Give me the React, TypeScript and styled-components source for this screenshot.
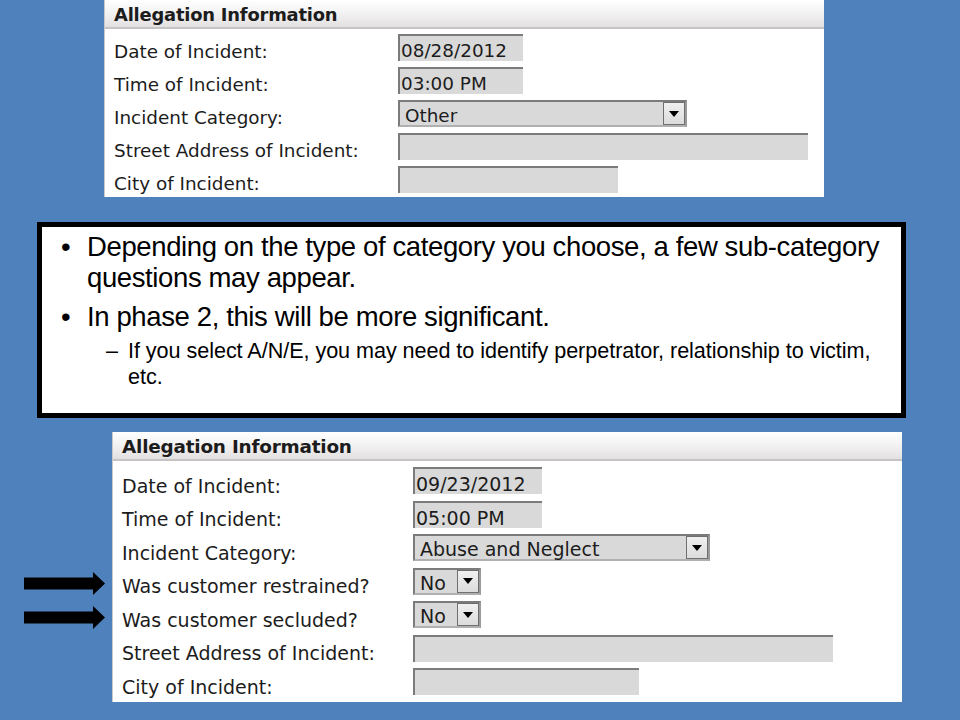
import React from 'react';
import styled, { createGlobalStyle } from 'styled-components';

const GlobalStyle = createGlobalStyle`
    html, body {
        margin: 0;
        padding: 0;
        background: #4f81bd;
    }
`;

interface IField {
    label: string
    value?: string
    kind: 'text' | 'select'
    width: number
    marked?: boolean
}

interface IPanelProps {
    fields: IField[]
    big?: boolean
}

const topFields: IField[] = [
    { label: 'Date of Incident:', value: '08/28/2012', kind: 'text', width: 125 },
    { label: 'Time of Incident:', value: '03:00 PM', kind: 'text', width: 125 },
    { label: 'Incident Category:', value: 'Other', kind: 'select', width: 289 },
    { label: 'Street Address of Incident:', kind: 'text', width: 410 },
    { label: 'City of Incident:', kind: 'text', width: 220 },
];

const bottomFields: IField[] = [
    { label: 'Date of Incident:', value: '09/23/2012', kind: 'text', width: 129 },
    { label: 'Time of Incident:', value: '05:00 PM', kind: 'text', width: 129 },
    { label: 'Incident Category:', value: 'Abuse and Neglect', kind: 'select', width: 297 },
    { label: 'Was customer restrained?', value: 'No', kind: 'select', width: 68, marked: true },
    { label: 'Was customer secluded?', value: 'No', kind: 'select', width: 68, marked: true },
    { label: 'Street Address of Incident:', kind: 'text', width: 420 },
    { label: 'City of Incident:', kind: 'text', width: 226 },
];

const Arrow = (): JSX.Element => (
    <SArrow width="81" height="23" viewBox="0 0 81 23">
        <polygon points="0,5.5 69,5.5 69,0 81,11.5 69,23 69,17.5 0,17.5" fill="#000" />
    </SArrow>
);

const FormPanel = ({ fields, big }: IPanelProps): JSX.Element => {
    return (
        <SPanel>
            <SHeader big={big}>Allegation Information</SHeader>
            <SRows big={big}>
                {fields.map((f) => (
                    <SRow key={f.label} big={big}>
                        {f.marked && <Arrow />}
                        <SLabel big={big}>{f.label}</SLabel>
                        {f.kind === 'text' ? (
                            <SInput style={{ width: f.width }}>{f.value}</SInput>
                        ) : (
                            <SSelect style={{ width: f.width }}>
                                <SSelectValue>{f.value}</SSelectValue>
                                <SDropButton>
                                    <STriangle />
                                </SDropButton>
                            </SSelect>
                        )}
                    </SRow>
                ))}
            </SRows>
        </SPanel>
    );
};

const App = (): JSX.Element => {
    return (
        <>
            <GlobalStyle />
            <SSlide>
                <STopPanelWrap>
                    <FormPanel fields={topFields} />
                </STopPanelWrap>
                <SNoteBox>
                    <SBullets>
                        <SBullet>
                            Depending on the type of category you choose, a few sub&#8209;category questions may appear.
                        </SBullet>
                        <SBullet>In phase 2, this will be more significant.</SBullet>
                        <SSubBullet>
                            If you select A/N/E, you may need to identify perpetrator, relationship to victim, etc.
                        </SSubBullet>
                    </SBullets>
                </SNoteBox>
                <SBottomPanelWrap>
                    <FormPanel fields={bottomFields} big />
                </SBottomPanelWrap>
            </SSlide>
        </>
    );
};

const FORM_FONT = `"DejaVu Sans", Verdana, sans-serif`;
const NOTE_FONT = `"Liberation Sans Narrow", "Arial Narrow", "Liberation Sans", Arial, sans-serif`;

const SSlide = styled.div`
    width: 960px;
    height: 720px;
    background: #4f81bd;
    display: flex;
    flex-direction: column;
    overflow: hidden;
`;

const STopPanelWrap = styled.div`
    margin-left: 104px;
    width: 720px;
    height: 197px;
`;

const SBottomPanelWrap = styled.div`
    margin-top: 14px;
    margin-left: 112px;
    width: 790px;
    height: 270px;
`;

const SPanel = styled.div`
    height: 100%;
    background: #fff;
    border-left: 1px solid #c9c9c9;
    box-sizing: border-box;
    font-family: ${FORM_FONT};
    color: #1c1c1c;
`;

const SHeader = styled.div<{ big?: boolean }>`
    height: 29px;
    box-sizing: border-box;
    padding-left: 9px;
    padding-top: 1px;
    display: flex;
    align-items: center;
    font-weight: bold;
    font-size: ${(p): number => (p.big ? 18.4 : 17.9)}px;
    letter-spacing: -0.2px;
    background: linear-gradient(#ffffff 0%, #f4f3f3 45%, #e3e0e0 100%);
    border-bottom: 2px solid #c6c4c4;
`;

const SRows = styled.div<{ big?: boolean }>`
    padding-top: ${(p): number => (p.big ? 3 : 2)}px;
    padding-left: 9px;
`;

const SRow = styled.div<{ big?: boolean }>`
    position: relative;
    display: grid;
    grid-template-columns: ${(p): number => (p.big ? 291 : 284)}px auto;
    justify-content: start;
    align-items: center;
    height: ${(p): number => (p.big ? 33.5 : 33)}px;
    font-size: ${(p): number => (p.big ? 19 : 18.4)}px;
`;

const SArrow = styled.svg`
    position: absolute;
    left: -98px;
    top: 50%;
    margin-top: -9px;
`;

const SLabel = styled.span<{ big?: boolean }>`
    white-space: nowrap;
    padding-top: ${(p): number => (p.big ? 10 : 7)}px;
`;

const SInput = styled.div`
    height: 27px;
    box-sizing: border-box;
    background: #d9d9d9;
    border-top: 2px solid #7b7b7b;
    border-left: 2px solid #7b7b7b;
    padding-left: 1px;
    padding-top: 4px;
    line-height: 22px;
    white-space: nowrap;
`;

const SSelect = styled.div`
    height: 27px;
    box-sizing: border-box;
    background: #d9d9d9;
    border: 2px solid #7b7b7b;
    border-right-color: #9a9a9a;
    border-bottom-color: #b0b0b0;
    display: flex;
    align-items: stretch;
    justify-content: space-between;
`;

const SSelectValue = styled.span`
    padding-left: 5px;
    padding-top: 3px;
    line-height: 21px;
    white-space: nowrap;
`;

const SDropButton = styled.span`
    width: 22px;
    box-sizing: border-box;
    background: linear-gradient(#f0f0f0, #dcdcdc);
    border: 1px solid #6f6f6f;
    display: flex;
    align-items: center;
    justify-content: center;
`;

const STriangle = styled.span`
    width: 0;
    height: 0;
    border-left: 5px solid transparent;
    border-right: 5px solid transparent;
    border-top: 6px solid #000;
`;

const SNoteBox = styled.div`
    margin-top: 25px;
    margin-left: 37px;
    width: 869px;
    height: 196px;
    box-sizing: border-box;
    background: #fff;
    border: 5px solid #000;
    padding: 4px 12px 0 19px;
    font-family: ${NOTE_FONT};
    color: #000;
`;

const SBullets = styled.ul`
    margin: 0;
    padding: 0;
    list-style: none;
`;

const SBullet = styled.li`
    position: relative;
    padding-left: 26px;
    font-size: 27.5px;
    letter-spacing: -0.38px;
    line-height: 31px;
    margin-bottom: 8px;

    &::before {
        content: '•';
        position: absolute;
        left: 0;
        top: 0;
    }
`;

const SSubBullet = styled.li`
    position: relative;
    margin-left: 45px;
    margin-top: -2px;
    padding-left: 22px;
    font-size: 21.6px;
    letter-spacing: -0.05px;
    line-height: 26px;

    &::before {
        content: '–';
        position: absolute;
        left: 0;
        top: 0;
    }
`;

export default App;
